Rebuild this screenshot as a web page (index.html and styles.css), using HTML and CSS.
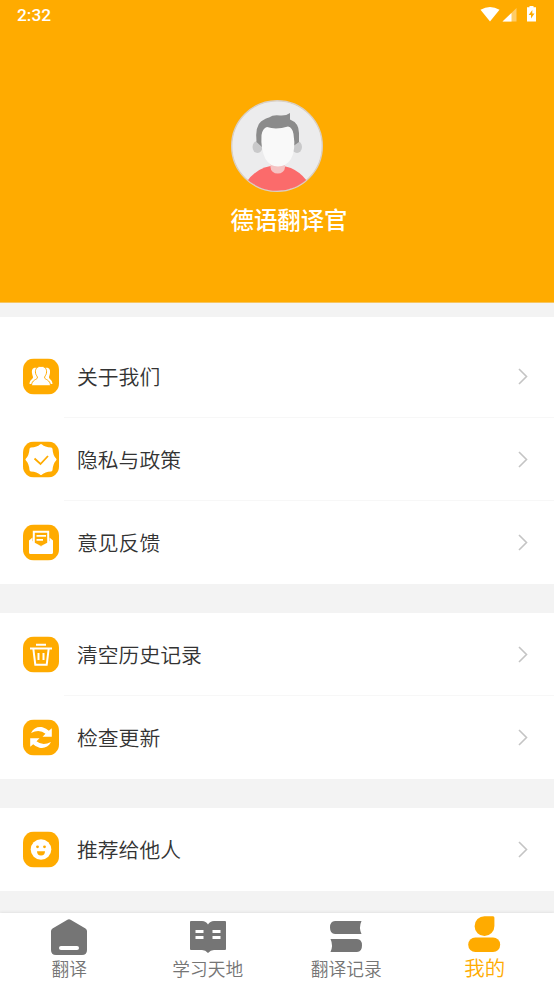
FILE: index.html
```html
<!DOCTYPE html>
<html lang="zh-CN">
<head>
<meta charset="utf-8">
<title>德语翻译官</title>
<link rel="stylesheet" href="styles.css">
</head>
<body>
<div class="app">
  <header class="hero">
    <div class="status">
      <span class="clock">2:32</span>
      <svg class="status-icons" width="58" height="18" viewBox="0 0 58 18" fill="#fff">
        <path d="M0.5 4.700Q10 -.7 19.500 4.700L10 16.500Z"/>
        <path d="M36.500 3V16.500H22.500Z" opacity=".4"/>
        <path d="M31.500 8V16.500H22.500Z"/>
        <path fill-rule="evenodd" d="M49.500 1h4v1.300h2.500v14.200h-9V2.300h2.500ZM52.300 5l-3.600 5h2.300v3.500l3.500-5h-2.200Z"/>
      </svg>
    </div>
    <svg class="avatar" width="94" height="94" viewBox="0 0 94 94">
      <defs><clipPath id="disc"><circle cx="47" cy="47" r="44.800"/></clipPath></defs>
      <circle cx="47" cy="47" r="45.300" fill="#ececed" stroke="#d9cfc4" stroke-width="1.400"/>
      <g clip-path="url(#disc)">
        <path d="M15 85Q27 66.500 47 66.500T79 85V94H15Z" fill="#fb6b6b"/>
        <path d="M40.500 65h14.500v3a7.200 6.500 0 0 1-14.500 0Z" fill="#f5c3c3"/>
        <ellipse cx="27.500" cy="48" rx="5" ry="6" fill="#c9c9ca"/>
        <ellipse cx="67" cy="48" rx="5" ry="6" fill="#c9c9ca"/>
        <path d="M26.500 43Q25 27 31 22.500Q36 19 39 18.500Q43 15.500 50 16.500Q56 17 60 14V20.500Q69 24 69 34V43L62 48H32Z" fill="#8b8b8b"/>
        <path d="M31.500 36Q32.500 29.500 37 28Q46 31 58 27.500Q62.500 28.500 63.500 35Q66 51 61 60Q56 67.500 48 67.500Q40 67.500 35.500 60Q30.500 50 31.500 36Z" fill="#f9f9f9"/>
      </g>
    </svg>
    <h1 class="title">德语翻译官</h1>
  </header>

  <main class="groups">
    <section class="group group-first">
      <a class="row">
        <svg class="badge" viewBox="0 0 36 36"><rect class="tile" width="36" height="36" rx="11"/>
          <path d="M14 9.500c-4-1-5.500 1.500-5 5 .3 2.500 1 3 1 4.500S6.500 21.500 6.500 25.500h8M22 9.500c4-1 5.500 1.500 5 5-.3 2.500-1 3-1 4.500s3.500 2.500 3.500 6.500h-8" fill="#fff"/>
          <path d="M18 7.800c-4 0-6.300 3-5.400 7 .4 2.200 1.800 2.700 1.800 4.500 0 1.700-5.900 1.900-5.900 8h19c0-6.100-5.900-6.300-5.900-8 0-1.800 1.400-2.300 1.800-4.500.9-4-1.400-7-5.400-7Z" fill="#fff" stroke="#ffab00" stroke-width="1"/>
        </svg>
        <span class="label">关于我们</span>
        <svg class="chevron" viewBox="0 0 12 18"><path d="M2 1.500 9.500 9 2 16.500"/></svg>
      </a>
      <a class="row">
        <svg class="badge" viewBox="0 0 36 36"><rect class="tile" width="36" height="36" rx="11"/>
          <path d="M18 4Q21 7 28 7.500Q28.500 14.500 32 18Q28.500 21.500 28 28.500Q21 29 18 32Q15 29 8 28.500Q7.500 21.500 4 18Q7.500 14.500 8 7.500Q15 7 18 4Z" fill="#fff" stroke="#fff" stroke-width="3" stroke-linejoin="round"/>
          <path d="m11.500 17 6 5.500 7.500-8" fill="none" stroke="#ffab00" stroke-width="1.800"/>
        </svg>
        <span class="label">隐私与政策</span>
        <svg class="chevron" viewBox="0 0 12 18"><path d="M2 1.500 9.500 9 2 16.500"/></svg>
      </a>
      <a class="row">
        <svg class="badge" viewBox="0 0 36 36"><rect class="tile" width="36" height="36" rx="11"/>
          <path d="M6 16 9.500 13v3.500L18 22l8.500-5.500V13l3.500 3v12q0 1.500-1.500 1.500h-21Q6 29.500 6 28Z" fill="#fff"/>
          <path d="M9.800 6.300h16.400v12.200L18 22l-8.200-3.500Z" fill="#fff"/>
          <path d="M11.800 8.300h12.400v10L18 21.500 11.800 18.300Z" fill="#ffab00"/>
          <path d="M13.500 11.300h9.500M13.500 15.300h6.500" stroke="#fff" stroke-width="1.700"/>
        </svg>
        <span class="label">意见反馈</span>
        <svg class="chevron" viewBox="0 0 12 18"><path d="M2 1.500 9.500 9 2 16.500"/></svg>
      </a>
    </section>

    <section class="group">
      <a class="row">
        <svg class="badge" viewBox="0 0 36 36"><rect class="tile" width="36" height="36" rx="11"/>
          <path d="M13 8.200h10M7 12h22M10.300 12l2 16.200h11.400l2-16.200M15.500 16.500v7M20.500 16.500v7" fill="none" stroke="#fff" stroke-width="2"/>
        </svg>
        <span class="label">清空历史记录</span>
        <svg class="chevron" viewBox="0 0 12 18"><path d="M2 1.500 9.500 9 2 16.500"/></svg>
      </a>
      <a class="row">
        <svg class="badge" viewBox="0 0 36 36"><rect class="tile" width="36" height="36" rx="11"/>
          <g fill="#fff"><path id="arrow" d="M8 13.500C10.500 8.500 15 6.800 19.500 7.800Q23.500 8.800 25.800 11.300L28.800 8.800V17.200H19.500L22.500 14.300Q16.500 9.300 8 13.500Z"/>
          <use href="#arrow" transform="rotate(180 18 18)"/></g>
        </svg>
        <span class="label">检查更新</span>
        <svg class="chevron" viewBox="0 0 12 18"><path d="M2 1.500 9.500 9 2 16.500"/></svg>
      </a>
    </section>

    <section class="group">
      <a class="row">
        <svg class="badge" viewBox="0 0 36 36"><rect class="tile" width="36" height="36" rx="11"/>
          <circle cx="18" cy="18" r="10.300" fill="#fff"/>
          <g fill="#ffab00"><circle cx="14.500" cy="15.300" r="1.400"/><circle cx="21.500" cy="15.300" r="1.400"/><path d="M14 19.700h8a4 4.200 0 0 1-8 0Z"/></g>
        </svg>
        <span class="label">推荐给他人</span>
        <svg class="chevron" viewBox="0 0 12 18"><path d="M2 1.500 9.500 9 2 16.500"/></svg>
      </a>
    </section>
  </main>

  <nav class="tabs">
    <a class="tab">
      <svg width="36" height="36" viewBox="0 0 36 36"><path d="M16 .9Q18-.4 20 .9L34.500 9.500Q36 10.500 36 12V31q0 5-5 5H5q-5 0-5-5V12Q0 10.500 1.500 9.500Z"/><rect x="8" y="27" width="20" height="4" rx="2" fill="#fff"/></svg>
      <span>翻译</span>
    </a>
    <a class="tab">
      <svg width="36" height="36" viewBox="0 0 36 36"><path d="M1 2H12Q16 2 18 5.500Q20 2 24 2H35Q36 2 36 3V30Q36 31 35 31H24Q20.500 31 18 34Q15.500 31 12 31H1Q0 31 0 30V3Q0 2 1 2Z"/><path d="M5.500 12.500h8M5.500 18.500h8M22.500 12.500h8M22.500 18.500h8" stroke="#fff" stroke-width="2.800"/></svg>
      <span>学习天地</span>
    </a>
    <a class="tab">
      <svg width="36" height="36" viewBox="0 0 36 36"><path d="M7 2H33.500Q30.500 8.500 33.500 15H7Q2 15 2 8.500T7 2ZM2.500 20H29Q34 20 34 26.500T29 33H2.500Q5.500 26.500 2.500 20Z"/></svg>
      <span>翻译记录</span>
    </a>
    <a class="tab tab-active">
      <svg width="36" height="38" viewBox="0 0 36 38"><path d="M26 1.200Q27.500 1.200 27.400 2.700V11A9.900 9.900 0 1 1 17.500 1.200Z"/><rect x="1.200" y="22.500" width="32" height="14.500" rx="7.200"/></svg>
      <span>我的</span>
    </a>
  </nav>
</div>
</body>
</html>
```
FILE: styles.css
```css
* {
  box-sizing: border-box;
}

body {
  margin: 0;
  background: #f3f3f3;
  font-family: "Noto Sans CJK SC", sans-serif;
}

.app {
  display: flex;
  flex-direction: column;
  width: 554px;
  height: 984px;
  overflow: hidden;
}

.hero {
  display: flex;
  flex-direction: column;
  align-items: center;
  height: 303px;
  background: #ffab00;
  border-bottom: 1px solid #f7c560;
}

.status {
  display: flex;
  justify-content: space-between;
  width: 100%;
  height: 99px;
  padding: 5px 16px 0 17px;
  color: #fff;
}

.clock {
  font: 500 17.3px/20px Roboto, sans-serif;
}

.avatar {
  display: block;
}

.title {
  margin: 9px 0 0 24px;
  width: 141px;
  color: #fff;
  font-size: 23.4px;
  font-weight: 500;
  line-height: 34px;
  text-align: center;
  white-space: nowrap;
}

.groups {
  display: flex;
  flex-direction: column;
  gap: 29px;
  height: 610px;
  padding-top: 14px;
}

.group {
  background: #fff;
}

.group-first {
  padding-top: 18px;
}

.row {
  display: flex;
  align-items: center;
  height: 83px;
  padding: 0 25px 1px 23px;
  background: linear-gradient(#f7f7f7, #f7f7f7) 64px 100% / 100% 1px no-repeat;
}

.row:last-child {
  background: none;
}

.badge {
  width: 36px;
  height: 36px;
  transform: translateY(0.5px);
}

.tile {
  fill: #ffab00;
}

.label {
  flex: 1;
  margin-left: 18px;
  color: #333;
  font-size: 20.8px;
  font-weight: 350;
  line-height: 30px;
}

.chevron {
  width: 12px;
  height: 18px;
  fill: none;
  stroke: #c4c4c4;
  stroke-width: 1.6;
  transform: translateY(0.5px);
}

.tabs {
  display: grid;
  grid-template-columns: repeat(4, 1fr);
  height: 71px;
  background: #fff;
  box-shadow: 0 -1px 2px #e4e4e4;
}

.tab {
  display: flex;
  flex-direction: column;
  align-items: center;
  padding-top: 6px;
  color: #757575;
  fill: currentColor;
  font-size: 17.7px;
  font-weight: 350;
  line-height: 26px;
}

.tab-active {
  padding-top: 2px;
  color: #ffab00;
  font-size: 20.5px;
  line-height: 29px;
}
```
